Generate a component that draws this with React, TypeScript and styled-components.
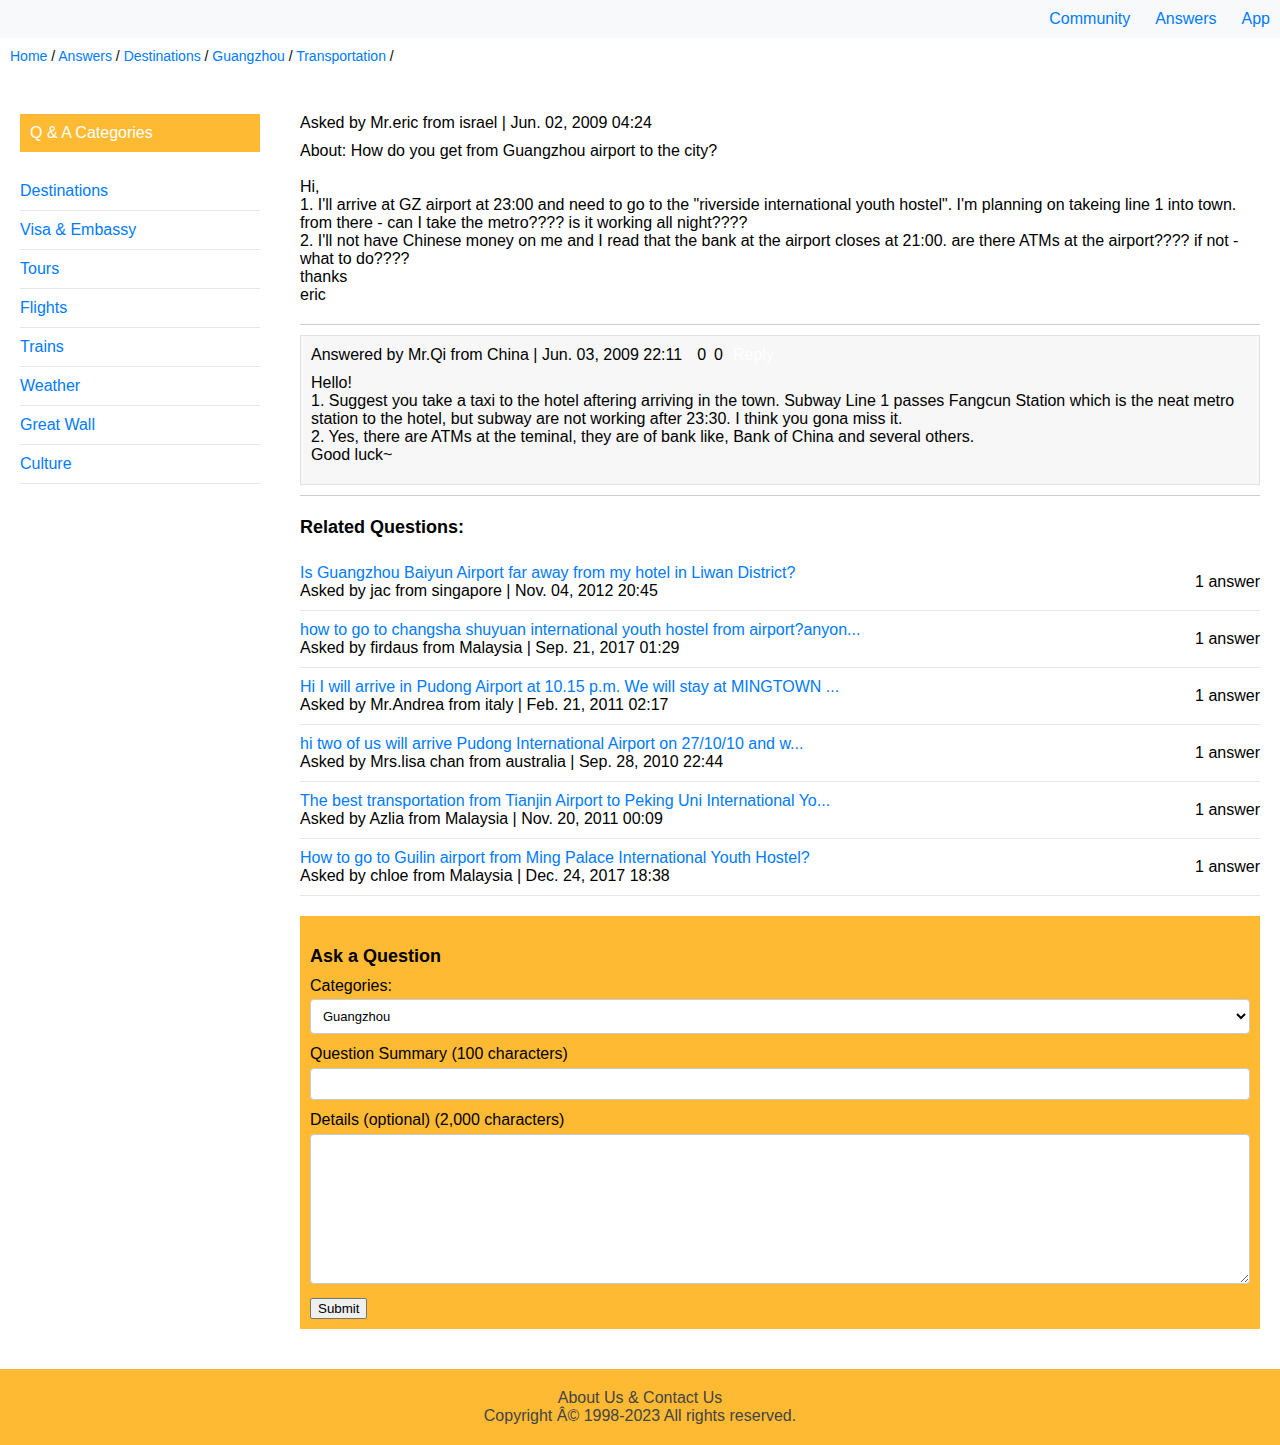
import React from 'react'
import styled, { createGlobalStyle } from 'styled-components'

const GlobalStyle = createGlobalStyle`
    body {
        margin: 0;
        font-family: "Liberation Sans", Arial, sans-serif;
        font-size: 16px;
        color: #000;
        background: #fff;
    }
    a {
        color: #007bff;
        text-decoration: none;
    }
`

const ORANGE = '#ffba33'

const categories = ['Destinations', 'Visa & Embassy', 'Tours', 'Flights', 'Trains', 'Weather', 'Great Wall', 'Culture']

const related = [
    { title: 'Is Guangzhou Baiyun Airport far away from my hotel in Liwan District?', meta: 'Asked by jac from singapore | Nov. 04, 2012 20:45' },
    { title: 'how to go to changsha shuyuan international youth hostel from airport?anyon...', meta: 'Asked by firdaus from Malaysia | Sep. 21, 2017 01:29' },
    { title: 'Hi I will arrive in Pudong Airport at 10.15 p.m. We will stay at MINGTOWN ...', meta: 'Asked by Mr.Andrea from italy | Feb. 21, 2011 02:17' },
    { title: 'hi two of us will arrive Pudong International Airport on 27/10/10 and w...', meta: 'Asked by Mrs.lisa chan from australia | Sep. 28, 2010 22:44' },
    { title: 'The best transportation from Tianjin Airport to Peking Uni International Yo...', meta: 'Asked by Azlia from Malaysia | Nov. 20, 2011 00:09' },
    { title: 'How to go to Guilin airport from Ming Palace International Youth Hostel?', meta: 'Asked by chloe from Malaysia | Dec. 24, 2017 18:38' },
]

const App = () => {
    return (
        <>
            <GlobalStyle />
            <TopBar>
                <a href="#">Community</a>
                <a href="#">Answers</a>
                <a href="#">App</a>
            </TopBar>
            <Crumbs>
                <a href="#">Home</a> / <a href="#">Answers</a> / <a href="#">Destinations</a> / <a href="#">Guangzhou</a> / <a href="#">Transportation</a> /
            </Crumbs>
            <Layout>
                <Sidebar>
                    <SideHead>Q &amp; A Categories</SideHead>
                    <SideList>
                        {categories.map(c => (
                            <SideItem key={c}><a href="#">{c}</a></SideItem>
                        ))}
                    </SideList>
                </Sidebar>
                <Main>
                    <Meta>Asked by Mr.eric from israel | Jun. 02, 2009 04:24</Meta>
                    <About>About: How do you get from Guangzhou airport to the city?</About>
                    <Body>
                        Hi,<br />
                        1. I'll arrive at GZ airport at 23:00 and need to go to the "riverside international youth hostel". I'm planning on takeing line 1 into town.<br />
                        from there - can I take the metro???? is it working all night????<br />
                        2. I'll not have Chinese money on me and I read that the bank at the airport closes at 21:00. are there ATMs at the airport???? if not - what to do????<br />
                        thanks<br />
                        eric
                    </Body>
                    <TopRule />
                    <AnswerBox>
                        <Meta>
                            Answered by Mr.Qi from China | Jun. 03, 2009 22:11<Votes>0</Votes><Votes>0</Votes><ReplyLink>Reply</ReplyLink>
                        </Meta>
                        <AnswerText>
                            Hello!<br />
                            1. Suggest you take a taxi to the hotel aftering arriving in the town. Subway Line 1 passes Fangcun Station which is the neat metro station to the hotel, but subway are not working after 23:30. I think you gona miss it.<br />
                            2. Yes, there are ATMs at the teminal, they are of bank like, Bank of China and several others.<br />
                            Good luck~
                        </AnswerText>
                    </AnswerBox>
                    <BottomRule />
                    <SectionTitle>Related Questions:</SectionTitle>
                    <div>
                        {related.map(r => (
                            <RelatedItem key={r.title}>
                                <div>
                                    <a href="#">{r.title}</a>
                                    <div>{r.meta}</div>
                                </div>
                                <span>1 answer</span>
                            </RelatedItem>
                        ))}
                    </div>
                    <AskBox>
                        <AskTitle>Ask a Question</AskTitle>
                        <FieldLabel $first>Categories:</FieldLabel>
                        <Select defaultValue="Guangzhou">
                            <option>Guangzhou</option>
                        </Select>
                        <FieldLabel>Question Summary (100 characters)</FieldLabel>
                        <TextInput type="text" />
                        <FieldLabel>Details (optional) (2,000 characters)</FieldLabel>
                        <TextArea />
                        <SubmitButton type="button">Submit</SubmitButton>
                    </AskBox>
                </Main>
            </Layout>
            <Footer>
                <div>About Us &amp; Contact Us</div>
                <div>Copyright Â© 1998-2023 All rights reserved.</div>
            </Footer>
        </>
    )
}

export default App

const TopBar = styled.div`
    height: 38px;
    background: #f8f9fa;
    display: flex;
    justify-content: flex-end;
    align-items: center;
    gap: 25px;
    padding: 0 10px;
`

const Crumbs = styled.div`
    padding: 10px 10px 0;
    font-size: 14px;
    line-height: 16px;
`

const Layout = styled.div`
    display: flex;
    gap: 40px;
    padding: 50px 20px 0;
`

const Sidebar = styled.div`
    width: 240px;
    flex-shrink: 0;
`

const SideHead = styled.div`
    height: 38px;
    background: ${ORANGE};
    color: #fff;
    display: flex;
    align-items: center;
    padding: 0 10px;
`

const SideList = styled.ul`
    list-style: none;
    margin: 20px 0 0;
    padding: 0;
`

const SideItem = styled.li`
    padding: 10px 0;
    line-height: 18px;
    border-bottom: 1px solid #e6e6e6;
`

const Main = styled.div`
    flex: 1;
    line-height: 18px;
`

const Meta = styled.div`
    line-height: 18px;
`

const About = styled.div`
    margin-top: 10px;
`

const Body = styled.div`
    margin-top: 18px;
`

const TopRule = styled.div`
    height: 1px;
    background: #cccccc;
    margin: 20px 0 10px;
`

const BottomRule = styled(TopRule)`
    margin: 10px 0 21px;
`

const AnswerBox = styled.div`
    background: #f7f7f7;
    border: 1px solid #e2e2e2;
    padding: 10px 10px 20px;
`

const Votes = styled.span`
    margin-left: 15px;
    & + & {
        margin-left: 8px;
    }
`

const ReplyLink = styled.span`
    color: #fff;
    margin-left: 10px;
`

const AnswerText = styled.div`
    margin-top: 10px;
`

const SectionTitle = styled.h3`
    font-size: 18px;
    line-height: 21px;
    margin: 0 0 16px;
`

const RelatedItem = styled.div`
    display: flex;
    justify-content: space-between;
    align-items: center;
    padding: 10px 0;
    border-bottom: 1px solid #e6e6e6;
`

const AskBox = styled.div`
    margin-top: 20px;
    background: ${ORANGE};
    padding: 30px 10px 10px;
    display: flex;
    flex-direction: column;
    align-items: flex-start;
`

const AskTitle = styled.h3`
    font-size: 18px;
    line-height: 21px;
    margin: 0 0 10px;
`

const FieldLabel = styled.label<{ $first?: boolean }>`
    display: block;
    line-height: 18px;
    margin: ${p => (p.$first ? '0 0 4px' : '11px 0 5px')};
`

const fieldBase = `
    width: 100%;
    box-sizing: border-box;
    border: 1px solid #cccccc;
    border-radius: 4px;
    background: #fff;
    font-family: "Liberation Sans", Arial, sans-serif;
`

const Select = styled.select`
    ${fieldBase}
    height: 35px;
    font-size: 13px;
    padding: 0 8px;
    color: #000;
`

const TextInput = styled.input`
    ${fieldBase}
    height: 32px;
    padding: 0 8px;
`

const TextArea = styled.textarea`
    ${fieldBase}
    height: 150px;
    padding: 6px 8px;
`

const SubmitButton = styled.button`
    margin-top: 14px;
    height: 21px;
    font-family: "Liberation Sans", Arial, sans-serif;
    font-size: 13.333px;
    padding: 1px 7px;
    background: #efefef;
    border: 1px solid #767676;
    border-radius: 2px;
    color: #000;
`

const Footer = styled.div`
    margin-top: 40px;
    background: ${ORANGE};
    color: #444;
    text-align: center;
    line-height: 18px;
    padding: 20px 0;
`
